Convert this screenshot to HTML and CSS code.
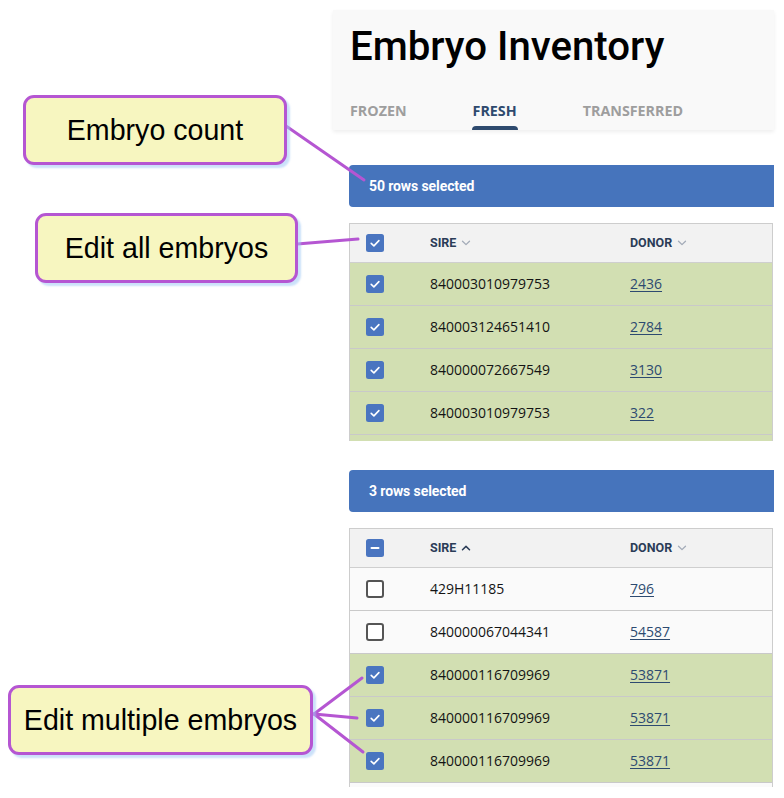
FILE: index.html
```html
<!DOCTYPE html>
<html lang="en">
<head>
<meta charset="utf-8">
<title>Embryo Inventory</title>
<link rel="stylesheet" href="styles.css">
</head>
<body>
<div class="app">
  <header class="page-header">
    <h1 class="title">Embryo Inventory</h1>
    <nav class="tabs">
      <span class="tab">FROZEN</span>
      <span class="tab tab-active">FRESH</span>
      <span class="tab">TRANSFERRED</span>
    </nav>
  </header>

  <section class="selection selection-all">
    <div class="selbar">50 rows selected</div>
    <div class="grid grid-all">
      <div class="row row-head">
        <div class="cell cell-check"><span class="cb cb-on"><svg viewBox="0 0 18 18" width="18" height="18"><rect width="18" height="18" rx="2.5" fill="#4a75c0"/><path d="M5.2 9.4 L7.9 11.9 L12.9 6.6" fill="none" stroke="#fff" stroke-width="1.6" stroke-linecap="round" stroke-linejoin="round"/></svg></span></div>
        <div class="cell head-label">SIRE <svg class="chev" viewBox="0 0 10 6" width="10" height="6"><path d="M1.5 1.2 L5 4.6 L8.5 1.2" fill="none" stroke="#a3abb8" stroke-width="1.3" stroke-linecap="round" stroke-linejoin="round"/></svg></div>
        <div class="cell head-label">DONOR <svg class="chev" viewBox="0 0 10 6" width="10" height="6"><path d="M1.5 1.2 L5 4.6 L8.5 1.2" fill="none" stroke="#a3abb8" stroke-width="1.3" stroke-linecap="round" stroke-linejoin="round"/></svg></div>
      </div>
      <div class="row row-sel">
        <div class="cell cell-check"><span class="cb cb-on"><svg viewBox="0 0 18 18" width="18" height="18"><rect width="18" height="18" rx="2.5" fill="#4a75c0"/><path d="M5.2 9.4 L7.9 11.9 L12.9 6.6" fill="none" stroke="#fff" stroke-width="1.6" stroke-linecap="round" stroke-linejoin="round"/></svg></span></div>
        <div class="cell">840003010979753</div>
        <div class="cell"><a class="link">2436</a></div>
      </div>
      <div class="row row-sel">
        <div class="cell cell-check"><span class="cb cb-on"><svg viewBox="0 0 18 18" width="18" height="18"><rect width="18" height="18" rx="2.5" fill="#4a75c0"/><path d="M5.2 9.4 L7.9 11.9 L12.9 6.6" fill="none" stroke="#fff" stroke-width="1.6" stroke-linecap="round" stroke-linejoin="round"/></svg></span></div>
        <div class="cell">840003124651410</div>
        <div class="cell"><a class="link">2784</a></div>
      </div>
      <div class="row row-sel">
        <div class="cell cell-check"><span class="cb cb-on"><svg viewBox="0 0 18 18" width="18" height="18"><rect width="18" height="18" rx="2.5" fill="#4a75c0"/><path d="M5.2 9.4 L7.9 11.9 L12.9 6.6" fill="none" stroke="#fff" stroke-width="1.6" stroke-linecap="round" stroke-linejoin="round"/></svg></span></div>
        <div class="cell">840000072667549</div>
        <div class="cell"><a class="link">3130</a></div>
      </div>
      <div class="row row-sel">
        <div class="cell cell-check"><span class="cb cb-on"><svg viewBox="0 0 18 18" width="18" height="18"><rect width="18" height="18" rx="2.5" fill="#4a75c0"/><path d="M5.2 9.4 L7.9 11.9 L12.9 6.6" fill="none" stroke="#fff" stroke-width="1.6" stroke-linecap="round" stroke-linejoin="round"/></svg></span></div>
        <div class="cell">840003010979753</div>
        <div class="cell"><a class="link">322</a></div>
      </div>
      <div class="row row-sel">
        <div class="cell cell-check"></div>
        <div class="cell"></div>
        <div class="cell"></div>
      </div>
    </div>
  </section>

  <section class="selection selection-some">
    <div class="selbar">3 rows selected</div>
    <div class="grid grid-some">
      <div class="row row-head">
        <div class="cell cell-check"><span class="cb cb-mixed"><svg viewBox="0 0 18 18" width="18" height="18"><rect width="18" height="18" rx="2.5" fill="#4a75c0"/><path d="M5.5 9 L12.5 9" fill="none" stroke="#fff" stroke-width="2" stroke-linecap="round"/></svg></span></div>
        <div class="cell head-label">SIRE <svg class="chev" viewBox="0 0 10 6" width="10" height="6"><path d="M1.5 4.8 L5 1.4 L8.5 4.8" fill="none" stroke="#2b3c57" stroke-width="1.5" stroke-linecap="round" stroke-linejoin="round"/></svg></div>
        <div class="cell head-label">DONOR <svg class="chev" viewBox="0 0 10 6" width="10" height="6"><path d="M1.5 1.2 L5 4.6 L8.5 1.2" fill="none" stroke="#a3abb8" stroke-width="1.3" stroke-linecap="round" stroke-linejoin="round"/></svg></div>
      </div>
      <div class="row">
        <div class="cell cell-check"><span class="cb cb-off"></span></div>
        <div class="cell">429H11185</div>
        <div class="cell"><a class="link">796</a></div>
      </div>
      <div class="row">
        <div class="cell cell-check"><span class="cb cb-off"></span></div>
        <div class="cell">840000067044341</div>
        <div class="cell"><a class="link">54587</a></div>
      </div>
      <div class="row row-sel">
        <div class="cell cell-check"><span class="cb cb-on"><svg viewBox="0 0 18 18" width="18" height="18"><rect width="18" height="18" rx="2.5" fill="#4a75c0"/><path d="M5.2 9.4 L7.9 11.9 L12.9 6.6" fill="none" stroke="#fff" stroke-width="1.6" stroke-linecap="round" stroke-linejoin="round"/></svg></span></div>
        <div class="cell">840000116709969</div>
        <div class="cell"><a class="link">53871</a></div>
      </div>
      <div class="row row-sel">
        <div class="cell cell-check"><span class="cb cb-on"><svg viewBox="0 0 18 18" width="18" height="18"><rect width="18" height="18" rx="2.5" fill="#4a75c0"/><path d="M5.2 9.4 L7.9 11.9 L12.9 6.6" fill="none" stroke="#fff" stroke-width="1.6" stroke-linecap="round" stroke-linejoin="round"/></svg></span></div>
        <div class="cell">840000116709969</div>
        <div class="cell"><a class="link">53871</a></div>
      </div>
      <div class="row row-sel">
        <div class="cell cell-check"><span class="cb cb-on"><svg viewBox="0 0 18 18" width="18" height="18"><rect width="18" height="18" rx="2.5" fill="#4a75c0"/><path d="M5.2 9.4 L7.9 11.9 L12.9 6.6" fill="none" stroke="#fff" stroke-width="1.6" stroke-linecap="round" stroke-linejoin="round"/></svg></span></div>
        <div class="cell">840000116709969</div>
        <div class="cell"><a class="link">53871</a></div>
      </div>
      <div class="row">
        <div class="cell cell-check"></div>
        <div class="cell"></div>
        <div class="cell"></div>
      </div>
    </div>
  </section>
</div>

<svg class="connectors" viewBox="0 0 784 798" width="784" height="798">
  <g stroke="#b556d2" stroke-width="3" stroke-linecap="round" fill="none">
    <line x1="286" y1="126" x2="364" y2="180"/>
    <line x1="297" y1="244" x2="358" y2="239"/>
    <line x1="314" y1="714" x2="362" y2="678"/>
    <line x1="314" y1="714" x2="357" y2="718"/>
    <line x1="314" y1="714" x2="363" y2="752"/>
  </g>
</svg>

<div class="callout callout-count">Embryo count</div>
<div class="callout callout-all">Edit all embryos</div>
<div class="callout callout-multi">Edit multiple embryos</div>
</body>
</html>
```

FILE: styles.css
```css
html, body {
  margin: 0;
  padding: 0;
  background: #ffffff;
}

body {
  width: 784px;
  height: 798px;
  overflow: hidden;
  position: relative;
  font-family: "Open Sans", "Noto Sans", sans-serif;
  color: #141414;
}

.app {
  margin-left: 333px;
  width: 441px;
  padding-top: 10px;
}

.page-header {
  background: #f9f9f9;
  height: 120px;
  box-sizing: border-box;
  padding-left: 17px;
  display: flex;
  flex-direction: column;
  justify-content: space-between;
  box-shadow: 0 2px 4px rgba(0, 0, 0, 0.07);
  position: relative;
}

.title {
  margin: 0;
  padding-top: 13px;
  font-family: Roboto, "Noto Sans", sans-serif;
  font-weight: 500;
  font-size: 40.2px;
  line-height: 48px;
  color: #000000;
}

.tabs {
  display: flex;
  gap: 66px;
}

.tab {
  font-family: "Open Sans", "Noto Sans", sans-serif;
  font-weight: 700;
  font-size: 14.3px;
  line-height: 20px;
  color: #9e9e9e;
  padding-bottom: 9px;
  position: relative;
}

.tab-active {
  color: #2e4a6e;
}

.tab-active::after {
  content: "";
  position: absolute;
  left: -1px;
  right: -1px;
  bottom: 0;
  height: 4px;
  border-radius: 4px 4px 0 0;
  background: #2e4a6e;
}

.selection {
  padding-left: 16px;
}

.selection-all {
  padding-top: 35px;
}

.selection-some {
  padding-top: 29px;
}

.selbar {
  height: 42px;
  background: #4674bc;
  border-radius: 4px 0 0 4px;
  color: #ffffff;
  font-family: Roboto, "Noto Sans", sans-serif;
  font-weight: 700;
  font-size: 14px;
  letter-spacing: -0.1px;
  display: flex;
  align-items: center;
  padding-left: 20px;
  margin-bottom: 16px;
}

.grid {
  border: 1px solid #cdcdcd;
  border-bottom: none;
  margin-right: 1px;
  overflow: hidden;
}

.grid-all {
  height: 218px;
  box-sizing: border-box;
}

.grid-some {
  height: 259px;
  box-sizing: border-box;
}

.row {
  display: grid;
  grid-template-columns: 80px 200px 1fr;
  height: 42px;
  border-bottom: 1px solid #c9c9c9;
  background: #fafafa;
  align-items: center;
  font-size: 14px;
  line-height: 18px;
}

.row-head {
  height: 38px;
  background: #f2f2f2;
  border-bottom: 1px solid #cfcfcf;
}

.row-sel {
  background: #d2dfb2;
}

.cell {
  display: flex;
  align-items: center;
  white-space: nowrap;
  padding-bottom: 1px;
}

.cell-check {
  padding-left: 16px;
  padding-bottom: 0;
}

.cb {
  display: block;
  width: 18px;
  height: 18px;
  box-sizing: border-box;
}

.cb svg {
  display: block;
}

.cb-off {
  border: 2px solid #555555;
  border-radius: 3px;
  background: #ffffff;
}

.head-label {
  font-family: Roboto, "Noto Sans", sans-serif;
  font-weight: 700;
  font-size: 12.5px;
  color: #2b3c57;
  gap: 5px;
}

.chev {
  display: block;
}

.link {
  color: #2d4a70;
  text-decoration: underline;
  text-underline-offset: 2px;
}

.connectors {
  position: absolute;
  left: 0;
  top: 0;
  pointer-events: none;
}

.callout {
  position: absolute;
  box-sizing: border-box;
  height: 70px;
  background: #f7f6c0;
  border: 3px solid #b556d2;
  border-radius: 11px;
  box-shadow: 3px 3px 2px rgba(160, 200, 245, 0.55);
  display: flex;
  align-items: center;
  justify-content: center;
  font-family: "Liberation Sans", Arial, sans-serif;
  font-size: 28.6px;
  color: #000000;
  white-space: nowrap;
}

.callout-count {
  left: 23px;
  top: 95px;
  width: 264px;
}

.callout-all {
  left: 35px;
  top: 213px;
  width: 263px;
}

.callout-multi {
  left: 8px;
  top: 685px;
  width: 305px;
}
```
